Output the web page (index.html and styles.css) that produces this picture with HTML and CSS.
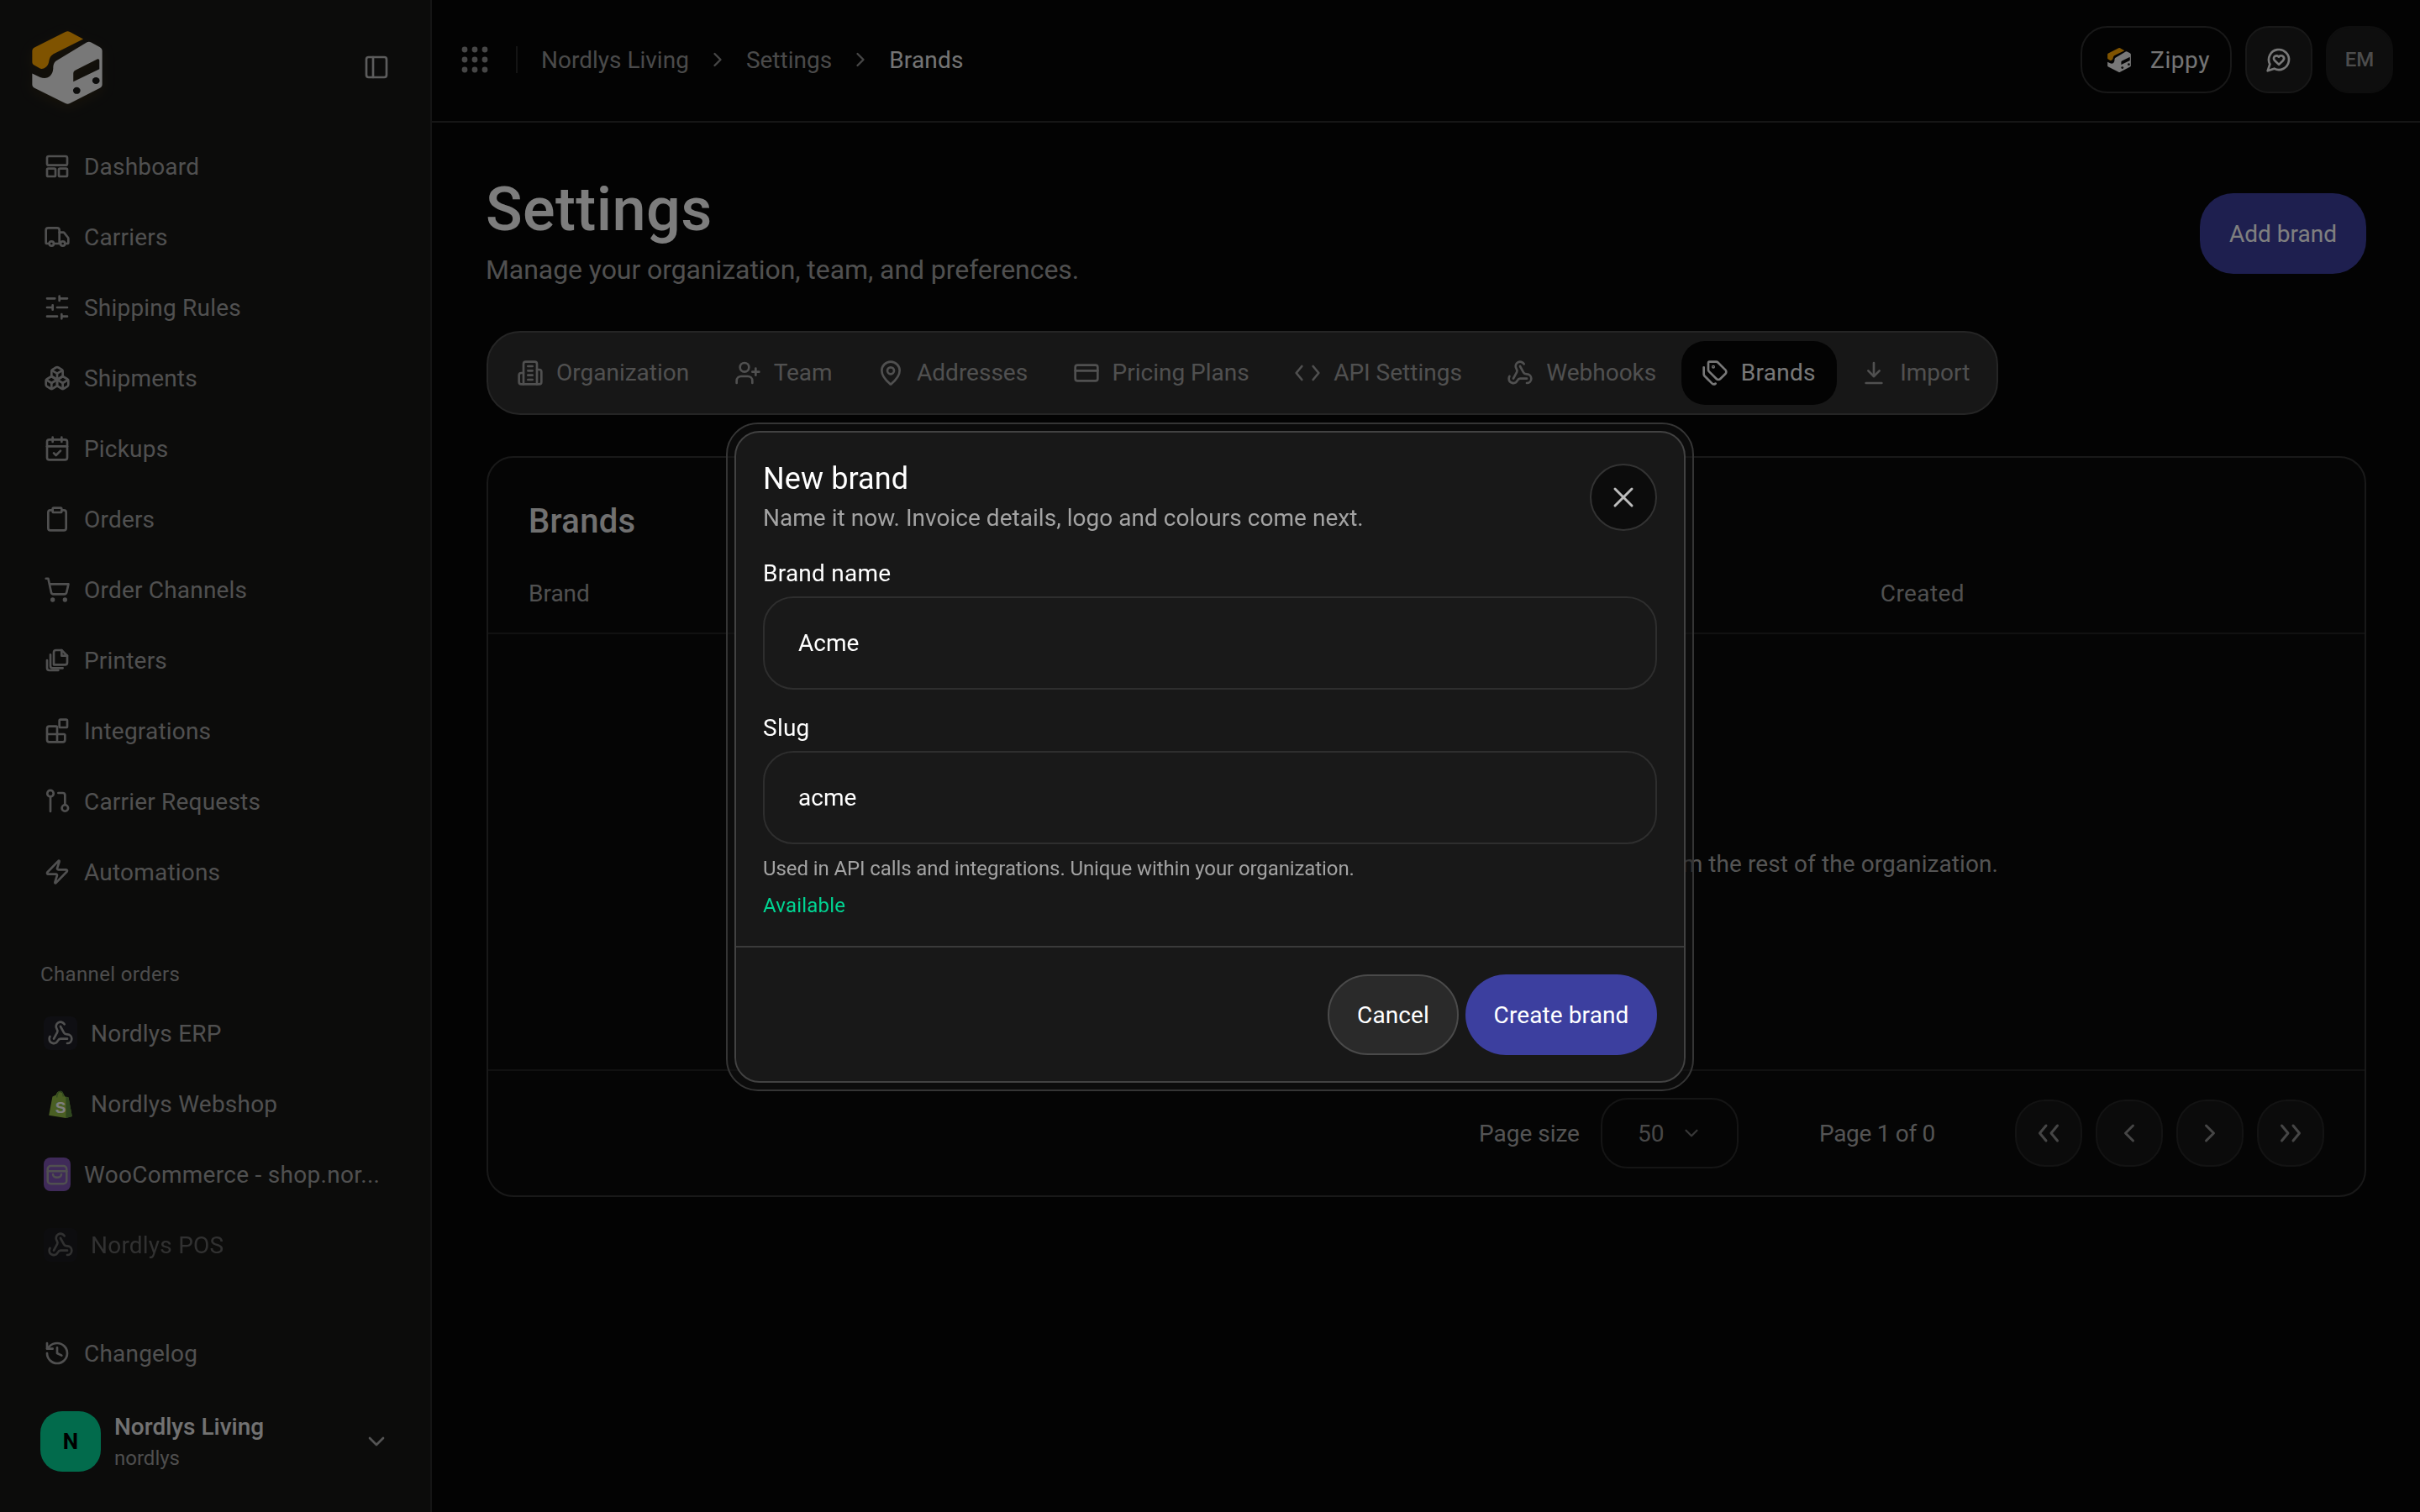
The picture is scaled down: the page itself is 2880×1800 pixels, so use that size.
FILE: index.html
```html
<!DOCTYPE html>
<html lang="en">
<head>
<meta charset="utf-8">
<title>Brands - Settings</title>
<link rel="stylesheet" href="styles.css">
</head>
<body>
<svg class="sprite" width="0" height="0" aria-hidden="true">
  <defs>
    <symbol id="i-dashboard" viewBox="0 0 24 24"><rect x="3" y="3" width="18" height="8" rx="1.5"/><rect x="3" y="14" width="7.5" height="7" rx="1"/><rect x="13.5" y="14" width="7.5" height="7" rx="1"/></symbol>
    <symbol id="i-truck" viewBox="0 0 24 24"><path d="M14 18V6a2 2 0 0 0-2-2H4a2 2 0 0 0-2 2v11a1 1 0 0 0 1 1h2"/><path d="M15 18H9"/><path d="M19 18h2a1 1 0 0 0 1-1v-3.65a1 1 0 0 0-.22-.624l-3.48-4.35A1 1 0 0 0 17.52 8H14"/><circle cx="17" cy="18" r="2"/><circle cx="7" cy="18" r="2"/></symbol>
    <symbol id="i-sliders" viewBox="0 0 24 24"><path d="M21 4h-7M10 4H3M21 12h-9M8 12H3M21 20h-5M12 20H3M14 2v4M8 10v4M16 18v4"/></symbol>
    <symbol id="i-boxes" viewBox="0 0 24 24"><path d="M2.97 12.92A2 2 0 0 0 2 14.63v3.24a2 2 0 0 0 .97 1.71l3 1.8a2 2 0 0 0 2.06 0L12 19v-5.5l-5-3-4.03 2.42Z"/><path d="m7 16.5-4.74-2.85"/><path d="m7 16.5 5-3"/><path d="M7 16.5v5.17"/><path d="M12 13.5V19l3.97 2.38a2 2 0 0 0 2.06 0l3-1.8a2 2 0 0 0 .97-1.71v-3.24a2 2 0 0 0-.97-1.71L17 10.5l-5 3Z"/><path d="m17 16.5-5-3"/><path d="m17 16.5 4.74-2.85"/><path d="M17 16.5v5.17"/><path d="M7.97 4.42A2 2 0 0 0 7 6.13v4.37l5 3 5-3V6.13a2 2 0 0 0-.97-1.71l-3-1.8a2 2 0 0 0-2.06 0l-3 1.8Z"/><path d="M12 8 7.26 5.15"/><path d="m12 8 4.74-2.85"/><path d="M12 13.5V8"/></symbol>
    <symbol id="i-calendar" viewBox="0 0 24 24"><path d="M8 2v4M16 2v4"/><rect x="3" y="4" width="18" height="18" rx="2"/><path d="M3 10h18"/><path d="m9 16 2 2 4-4"/></symbol>
    <symbol id="i-clipboard" viewBox="0 0 24 24"><rect x="8" y="2" width="8" height="4" rx="1"/><path d="M16 4h2a2 2 0 0 1 2 2v14a2 2 0 0 1-2 2H6a2 2 0 0 1-2-2V6a2 2 0 0 1 2-2h2"/></symbol>
    <symbol id="i-cart" viewBox="0 0 24 24"><circle cx="8" cy="21" r="1"/><circle cx="19" cy="21" r="1"/><path d="M2.05 2.05h2l2.66 12.42a2 2 0 0 0 2 1.58h9.78a2 2 0 0 0 1.95-1.57l1.65-7.43H5.12"/></symbol>
    <symbol id="i-files" viewBox="0 0 24 24"><path d="M9 16V5a2 2 0 0 1 2-2h5l5 5v6a2 2 0 0 1-2 2H9Z"/><path d="M16 3v5h5"/><path d="M6 7v10a2 2 0 0 0 2 2h9"/><path d="M3 12v7a2 2 0 0 0 2 2h8"/></symbol>
    <symbol id="i-blocks" viewBox="0 0 24 24"><path d="M12 22V9a1 1 0 0 0-1-1H5a2 2 0 0 0-2 2v10a2 2 0 0 0 2 2h12a2 2 0 0 0 2-2v-4a1 1 0 0 0-1-1H3"/><rect x="14" y="2" width="7" height="7" rx="1"/></symbol>
    <symbol id="i-requests" viewBox="0 0 24 24"><circle cx="6" cy="5" r="2.8"/><path d="M6 8v13"/><path d="M13 4.5h4a2 2 0 0 1 2 2V15"/><circle cx="19" cy="18" r="2.8"/></symbol>
    <symbol id="i-zap" viewBox="0 0 24 24"><path d="M4 14a1 1 0 0 1-.78-1.63l9.9-10.2a.5.5 0 0 1 .86.46l-1.92 6.02A1 1 0 0 0 13 10h7a1 1 0 0 1 .78 1.63l-9.9 10.2a.5.5 0 0 1-.86-.46l1.92-6.02A1 1 0 0 0 11 14z"/></symbol>
    <symbol id="i-webhook" viewBox="0 0 24 24"><path d="M18 16.98h-5.99c-1.1 0-1.95.94-2.48 1.9A4 4 0 0 1 2 17c.01-.7.2-1.4.57-2"/><path d="m6 17 3.13-5.78c.53-.97.1-2.18-.5-3.1a4 4 0 1 1 6.89-4.06"/><path d="m12 6 3.13 5.73C15.66 12.7 16.9 13 18 13a4 4 0 0 1 0 8"/></symbol>
    <symbol id="i-history" viewBox="0 0 24 24"><path d="M3 12a9 9 0 1 0 9-9 9.75 9.75 0 0 0-6.74 2.74L3 8"/><path d="M3 3v5h5"/><path d="M12 7v5l4 2"/></symbol>
    <symbol id="i-down" viewBox="0 0 24 24"><path d="m6 9 6 6 6-6"/></symbol>
    <symbol id="i-right" viewBox="0 0 24 24"><path d="m9 18 6-6-6-6"/></symbol>
    <symbol id="i-pg-left" viewBox="0 0 24 24"><path d="m15 18-6-6 6-6"/></symbol>
    <symbol id="i-pg-right" viewBox="0 0 24 24"><path d="m9 18 6-6-6-6"/></symbol>
    <symbol id="i-first" viewBox="0 0 24 24"><path d="m10 18-5-6 5-6"/><path d="m19 18-5-6 5-6"/></symbol>
    <symbol id="i-last" viewBox="0 0 24 24"><path d="m5 18 5-6-5-6"/><path d="m14 18 5-6-5-6"/></symbol>
    <symbol id="i-panel" viewBox="0 0 24 24"><rect x="3" y="3" width="18" height="18" rx="2"/><path d="M9 3v18"/></symbol>
    <symbol id="i-building" viewBox="0 0 24 24"><path d="M6 22V4a2 2 0 0 1 2-2h8a2 2 0 0 1 2 2v18Z"/><path d="M6 12H4a2 2 0 0 0-2 2v6a2 2 0 0 0 2 2h2"/><path d="M18 9h2a2 2 0 0 1 2 2v9a2 2 0 0 1-2 2h-2"/><path d="M10 6h4M10 10h4M10 14h4M10 18h4"/></symbol>
    <symbol id="i-userplus" viewBox="0 0 24 24"><path d="M16 21v-2a4 4 0 0 0-4-4H6a4 4 0 0 0-4 4v2"/><circle cx="9" cy="7" r="4"/><path d="M19 8v6M22 11h-6"/></symbol>
    <symbol id="i-pin" viewBox="0 0 24 24"><path d="M20 10c0 4.993-5.539 10.193-7.399 11.799a1 1 0 0 1-1.202 0C9.539 20.193 4 14.993 4 10a8 8 0 0 1 16 0"/><circle cx="12" cy="10" r="3"/></symbol>
    <symbol id="i-card" viewBox="0 0 24 24"><rect x="2" y="5" width="20" height="14" rx="2"/><path d="M2 10h20"/></symbol>
    <symbol id="i-code" viewBox="0 0 24 24"><path d="m17 6 5 6-5 6"/><path d="m7 6-5 6 5 6"/></symbol>
    <symbol id="i-tags" viewBox="0 0 24 24"><path d="M13.172 2a2 2 0 0 1 1.414.586l6.71 6.71a2.4 2.4 0 0 1 0 3.408l-4.592 4.592a2.4 2.4 0 0 1-3.408 0l-6.71-6.71A2 2 0 0 1 6 9.172V3a1 1 0 0 1 1-1z"/><path d="M2 7v6.172a2 2 0 0 0 .586 1.414l6.71 6.71a2.4 2.4 0 0 0 3.18.172"/><circle cx="10.5" cy="6.5" r=".5"/></symbol>
    <symbol id="i-import" viewBox="0 0 24 24"><path d="M12 3v12"/><path d="m7 10 5 5 5-5"/><path d="M5 21h14"/></symbol>
    <symbol id="i-chat" viewBox="0 0 24 24"><path d="M7.9 20A9 9 0 1 0 4 16.1L2 22Z"/><path d="M15.8 9.2a2.5 2.5 0 0 0-3.5 0l-.3.4-.35-.3a2.42 2.42 0 1 0-3.2 3.6l3.6 3.5 3.6-3.5c1.2-1.2 1.1-2.7.2-3.7"/></symbol>
    <symbol id="i-x" viewBox="0 0 24 24"><path d="M18 6 6 18"/><path d="m6 6 12 12"/></symbol>
    <symbol id="logo" viewBox="55 52 247 258">
      <path class="logo-amber" d="M172 55a18 18 0 0 1 16 0l47 25-105 53c-10 6-14 14-16 26-2 16-14 28-30 26L63 173c-6-3-8-7-8-13v-37c0-6 3-10 8-13z"/>
      <path class="logo-body" fill-rule="evenodd" d="M247 92a18 18 0 0 1 16 0l30 16c6 3 9 8 9 14v118c0 6-3 10-8 13l-106 54a18 18 0 0 1-16 0L63 253c-5-3-8-7-8-13v-38l28 13c24 10 44-4 46-30 0-14 3-24 14-30z M208 190l76-39c5-2 8 0 8 5v30l-92 45v-29c0-6 3-10 8-12z"/>
      <ellipse class="logo-hole" cx="212" cy="262" rx="13" ry="12"/>
      <ellipse class="logo-hole" cx="280" cy="227" rx="13" ry="12"/>
    </symbol>
  </defs>
</svg>

<div class="app">
  <aside class="sidebar">
    <div class="brand-row">
      <svg class="logo"><use href="#logo"/></svg>
      <svg class="ico panel-toggle"><use href="#i-panel"/></svg>
    </div>
    <nav class="nav">
      <a class="nav-item"><svg class="ico"><use href="#i-dashboard"/></svg><span>Dashboard</span></a>
      <a class="nav-item"><svg class="ico"><use href="#i-truck"/></svg><span>Carriers</span></a>
      <a class="nav-item"><svg class="ico"><use href="#i-sliders"/></svg><span>Shipping Rules</span></a>
      <a class="nav-item"><svg class="ico"><use href="#i-boxes"/></svg><span>Shipments</span></a>
      <a class="nav-item"><svg class="ico"><use href="#i-calendar"/></svg><span>Pickups</span></a>
      <a class="nav-item"><svg class="ico"><use href="#i-clipboard"/></svg><span>Orders</span></a>
      <a class="nav-item"><svg class="ico"><use href="#i-cart"/></svg><span>Order Channels</span></a>
      <a class="nav-item"><svg class="ico"><use href="#i-files"/></svg><span>Printers</span></a>
      <a class="nav-item"><svg class="ico"><use href="#i-blocks"/></svg><span>Integrations</span></a>
      <a class="nav-item"><svg class="ico"><use href="#i-requests"/></svg><span>Carrier Requests</span></a>
      <a class="nav-item"><svg class="ico"><use href="#i-zap"/></svg><span>Automations</span></a>
    </nav>
    <div class="side-label">Channel orders</div>
    <nav class="nav channels">
      <a class="nav-item channel"><span class="chan-box hook"><svg class="ico-sm"><use href="#i-webhook"/></svg></span><span>Nordlys ERP</span></a>
      <a class="nav-item channel"><span class="chan-box">
        <svg class="shopify" viewBox="0 0 28 32"><path class="bag" d="M5 8 1 29l19 3 7-2-4-21-4-1-1-2c-1-2-2-3-4-3C12 1 10 3 9 6z"/><path class="bag-dark" d="M20 32l7-2-4-21-3-1z"/><path class="bag-line" d="M10 9c0-4 2-7 4-7s3 2 3 6"/><text class="bag-s" x="8" y="26">S</text></svg>
      </span><span>Nordlys Webshop</span></a>
      <a class="nav-item channel woo"><span class="chan-box woo-box"><svg class="woo-ico" viewBox="0 0 24 24"><rect x="3" y="4" width="18" height="17" rx="3"/><path d="M3 9h18"/><path d="M8 12a4 3 0 0 0 8 0"/></svg></span><span class="woo-name">WooCommerce - shop.nor...</span></a>
      <a class="nav-item channel off"><span class="chan-box hook"><svg class="ico-sm"><use href="#i-webhook"/></svg></span><span>Nordlys POS</span></a>
    </nav>
    <div class="side-foot">
      <a class="nav-item"><svg class="ico"><use href="#i-history"/></svg><span>Changelog</span></a>
      <div class="org">
        <div class="org-avatar">N</div>
        <div class="org-text"><div class="org-name">Nordlys Living</div><div class="org-slug">nordlys</div></div>
        <svg class="ico org-chev"><use href="#i-down"/></svg>
      </div>
    </div>
  </aside>

  <div class="main">
    <header class="topbar">
      <div class="crumbs">
        <svg class="dots" viewBox="0 0 32 32"><circle cx="4" cy="4" r="3.4"/><circle cx="16" cy="4" r="3.4"/><circle cx="28" cy="4" r="3.4"/><circle cx="4" cy="16" r="3.4"/><circle cx="16" cy="16" r="3.4"/><circle cx="28" cy="16" r="3.4"/><circle cx="4" cy="28" r="3.4"/><circle cx="16" cy="28" r="3.4"/><circle cx="28" cy="28" r="3.4"/></svg>
        <span class="vr"></span>
        <span class="crumb">Nordlys Living</span>
        <svg class="crumb-chev"><use href="#i-right"/></svg>
        <span class="crumb">Settings</span>
        <svg class="crumb-chev"><use href="#i-right"/></svg>
        <span class="crumb now">Brands</span>
      </div>
      <div class="top-actions">
        <button class="zippy"><svg class="zippy-logo"><use href="#logo"/></svg><span>Zippy</span></button>
        <button class="square"><svg class="ico chat"><use href="#i-chat"/></svg></button>
        <div class="square me">EM</div>
      </div>
    </header>

    <main class="page">
      <div class="page-head">
        <div>
          <h1>Settings</h1>
          <p class="lead">Manage your organization, team, and preferences.</p>
        </div>
        <button class="add">Add brand</button>
      </div>

      <div class="tabs">
        <a class="tab"><svg class="ico"><use href="#i-building"/></svg><span>Organization</span></a>
        <a class="tab"><svg class="ico"><use href="#i-userplus"/></svg><span>Team</span></a>
        <a class="tab"><svg class="ico"><use href="#i-pin"/></svg><span>Addresses</span></a>
        <a class="tab"><svg class="ico"><use href="#i-card"/></svg><span>Pricing Plans</span></a>
        <a class="tab"><svg class="ico"><use href="#i-code"/></svg><span>API Settings</span></a>
        <a class="tab"><svg class="ico"><use href="#i-webhook"/></svg><span>Webhooks</span></a>
        <a class="tab on"><svg class="ico"><use href="#i-tags"/></svg><span>Brands</span></a>
        <a class="tab"><svg class="ico"><use href="#i-import"/></svg><span>Import</span></a>
      </div>

      <section class="card">
        <h2>Brands</h2>
        <div class="thead"><span>Brand</span><span>Created</span></div>
        <div class="empty"><p>from the rest of the organization.</p></div>
        <div class="tfoot">
          <span class="muted">Page size</span>
          <div class="select"><span>50</span><svg class="sel-chev"><use href="#i-down"/></svg></div>
          <span class="muted page-of">Page 1 of 0</span>
          <div class="pager">
            <button class="pg"><svg class="pg-ico"><use href="#i-first"/></svg></button>
            <button class="pg"><svg class="pg-ico"><use href="#i-pg-left"/></svg></button>
            <button class="pg"><svg class="pg-ico"><use href="#i-pg-right"/></svg></button>
            <button class="pg"><svg class="pg-ico"><use href="#i-last"/></svg></button>
          </div>
        </div>
      </section>
    </main>
  </div>
</div>

<div class="overlay">
  <div class="ring">
    <div class="dialog">
      <div class="dlg-body">
        <h3>New brand</h3>
        <p class="dlg-sub">Name it now. Invoice details, logo and colours come next.</p>
        <button class="close"><svg class="close-x"><use href="#i-x"/></svg></button>
        <label class="lbl">Brand name</label>
        <div class="input">Acme</div>
        <label class="lbl">Slug</label>
        <div class="input">acme</div>
        <p class="help">Used in API calls and integrations. Unique within your organization.</p>
        <p class="ok">Available</p>
      </div>
      <div class="dlg-foot">
        <button class="btn cancel">Cancel</button>
        <button class="btn create">Create brand</button>
      </div>
    </div>
  </div>
</div>
</body>
</html>
```
FILE: styles.css
```css
* { box-sizing: border-box; }
html, body { margin: 0; height: 100%; }
body {
  font-family: Roboto, "Liberation Sans", Arial, sans-serif;
  font-size: 28px;
  background: #060606;
  color: #f0f0f0;
  overflow: hidden;
}
.sprite { position: absolute; }
h1, h2, h3, p { margin: 0; font-weight: 400; }
button { font: inherit; color: inherit; background: none; border: 0; padding: 0; }
.ico, .ico-sm, .crumb-chev, .sel-chev, .close-x, .pg-ico, .woo-ico {
  fill: none; stroke: currentColor; stroke-linecap: round; stroke-linejoin: round; stroke-width: 2;
  flex: none;
}
.ico { width: 32px; height: 32px; }
.ico-sm { width: 32px; height: 32px; }

.app { display: flex; height: 1800px; }

/* sidebar */
.sidebar {
  width: 514px; flex: none; height: 100%;
  background: #181817;
  border-right: 2px solid #2a2a2a;
  display: flex; flex-direction: column;
  padding-bottom: 48px;
  color: #a0a0a0;
}
.brand-row { height: 160px; flex: none; display: flex; align-items: flex-start; padding: 37px 48px 0 38px; justify-content: space-between; }
.logo { width: 84px; height: 87px; filter: drop-shadow(0 4px 8px rgba(255,166,0,.1)); }
.logo-amber { fill: #ffa600; }
.logo-body { fill: #f0f0f0; }
.logo-hole { fill: #181817; }
.panel-toggle { margin-top: 27px; color: #b8b8b8; }
.nav { display: flex; flex-direction: column; gap: 8px; }
.nav-item { height: 76px; display: flex; align-items: center; gap: 16px; padding-left: 52px; flex: none; letter-spacing: .2px; }
.nav-item > span:last-child { padding-top: 1px; }
.side-label { margin: 68px 0 16px 48px; font-size: 24px; line-height: 32px; color: #9a9a9a; letter-spacing: .35px; }
.chan-box { width: 40px; height: 40px; border-radius: 8px; display: flex; align-items: center; justify-content: center; flex: none; }
.chan-box.hook { background: #1e1e26; }
.shopify { width: 30px; height: 34px; }
.bag { fill: #95bf47; }
.bag-dark { fill: #5e8e3e; }
.bag-line { fill: none; stroke: #5e8e3e; stroke-width: 1.2; }
.bag-s { fill: #fff; font-size: 18px; font-weight: 700; font-family: "Liberation Sans", sans-serif; }
.woo-box { width: 32px; background: #7f54b3; color: #a0a0a0; }
.woo-ico { width: 30px; height: 30px; }
.woo-name { white-space: nowrap; letter-spacing: .28px; }
.channel { letter-spacing: .22px; }
.channel.off { opacity: .55; }
.side-foot { margin-top: auto; }
.org { display: flex; align-items: center; margin: 31px 0 0 48px; height: 72px; }
.org-avatar {
  width: 72px; height: 72px; border-radius: 26px; background: #04d698;
  color: #000; font-size: 26px; font-weight: 700; display: flex; align-items: center; justify-content: center; flex: none;
}
.org-text { margin-left: 16px; flex: 1; padding-top: 2px; }
.org-name { font-weight: 500; line-height: 38px; color: #e4e4e4; }
.org-slug { font-size: 24px; line-height: 36px; color: #9c9c9c; }
.org-chev { margin-right: 48px; color: #a8a8a8; }

/* top bar */
.main { flex: 1; min-width: 0; display: flex; flex-direction: column; }
.topbar {
  height: 146px; flex: none; border-bottom: 2px solid #2c2c2c;
  display: flex; justify-content: space-between; align-items: center;
  padding: 0 32px 2px 35px;
}
.crumbs { display: flex; align-items: center; }
.dots { width: 32px; height: 32px; fill: #8c8c8c; }
.vr { width: 2px; height: 32px; background: #282828; margin: 0 28px 0 33px; }
.crumb { color: #949494; }
.crumb.now { color: #e8e8e8; letter-spacing: .2px; }
.crumb-chev { width: 28px; height: 28px; color: #8c8c8c; margin: 0 20px; }
.top-actions { display: flex; gap: 16px; align-items: center; }
.zippy {
  width: 180px; height: 80px; border-radius: 32px; border: 2px solid #303030;
  display: flex; align-items: center; gap: 23px; padding-left: 30px; color: #e8e8e8; font-size: 28px; letter-spacing: .6px;
}
.zippy-logo { width: 28px; height: 29px; }
.square {
  width: 80px; height: 80px; border-radius: 28px; background: #1c1c1c; border: 2px solid #303030;
  display: flex; align-items: center; justify-content: center;
}
.chat { color: #f0f0f0; }
.me { border-color: #1c1c1c; color: #989898; font-size: 24px; font-weight: 500; }

/* page */
.page { padding: 64px 64px 0 65px; }
.page-head { display: flex; justify-content: space-between; align-items: flex-start; }
h1 { font-size: 72px; line-height: 80px; font-weight: 500; color: #fafafa; margin-left: -1px; letter-spacing: .4px; }
.lead { font-size: 32px; line-height: 44px; margin: 9px 0 0 -1px; color: #a0a0a0; letter-spacing: -.07px; }
.add {
  margin-top: 20px; width: 198px; height: 96px; border-radius: 40px; background: #3c3f9f; color: #fff; font-weight: 450;
}
.tabs {
  margin-top: 51px; width: 1799px; height: 100px; padding: 10px;
  background: #2e2e2e; border: 2px solid #4a4a4a; border-radius: 40px;
  display: flex; gap: 4.4px; color: #a0a0a0;
}
.tab { height: 76px; display: flex; align-items: center; gap: 15px; padding: 0 25px 0 24px; border-radius: 28px; white-space: nowrap; }
.tab span { padding-bottom: 2px; }
.tab.on { background: #060606; color: #f0f0f0; letter-spacing: .3px; }
.card {
  margin-top: 49px; height: 882px; border: 2px solid #333; border-radius: 32px; background: #0a0a0a;
  display: flex; flex-direction: column;
}
h2 { align-self: flex-start; font-size: 40px; line-height: 52px; font-weight: 500; margin: 50px 48px 0; color: #e0e0e0; letter-spacing: .3px; }
.thead { height: 82px; flex: none; margin-top: 26px; border-bottom: 2px solid #222; display: flex; justify-content: space-between; align-items: flex-start; padding: 17px 0 0 48px; color: #a0a0a0; }
.thead span:last-child { margin-right: 476px; letter-spacing: .4px; }
.empty { flex: 1; display: flex; align-items: center; justify-content: flex-end; color: #a8a8a8; padding: 28px 436px 0 0; letter-spacing: .08px; }
.tfoot { height: 150px; flex: none; border-top: 2px solid #222; display: flex; align-items: center; padding-right: 48px; justify-content: flex-end; color: #a8a8a8; }
.select { width: 164px; height: 84px; border: 2px solid #2a2a2a; border-radius: 32px; margin-left: 25px; display: flex; align-items: center; padding-left: 42px; gap: 20px; color: #909090; }
.sel-chev { width: 26px; height: 26px; color: #707070; }
.page-of { margin-left: 96px; margin-right: 95px; letter-spacing: -.3px; }
.pager { display: flex; gap: 16px; }
.pg { width: 80px; height: 80px; border-radius: 36px; background: #161616; border: 2px solid #262626; display: flex; align-items: center; justify-content: center; color: #8c8c8c; }
.pg-ico { width: 36px; height: 36px; }

/* modal */
.overlay {
  position: fixed; inset: 0; background: rgba(0,0,0,.5);
  display: flex; align-items: center; justify-content: center;
}
.ring {
  width: 1152px; margin-top: 2px; padding: 8px; background: rgba(20,20,20,.5); border: 2px solid #353535; border-radius: 38px;
}
.dialog { background: #181818; border: 2px solid #424242; border-radius: 30px; color: #fff; }
.dlg-body { position: relative; padding: 31px 32px 32px; }
h3 { font-size: 36px; line-height: 48px; font-weight: 450; letter-spacing: .1px; }
.dlg-sub { line-height: 40px; margin-top: 3px; color: #a3a3a3; letter-spacing: .03px; }
.close {
  position: absolute; top: 37px; right: 32px; width: 80px; height: 80px; border-radius: 50%;
  background: #0c0c0c; border: 2px solid #333; display: flex; align-items: center; justify-content: center; color: #bdbdbd;
}
.close-x { width: 40px; height: 40px; stroke-width: 1.8; }
.lbl { display: block; font-weight: 450; line-height: 36px; margin: 28px 0 9px; letter-spacing: .25px; }
.input { height: 111px; border: 2px solid #2e2e2e; border-radius: 36px; background: #191919; display: flex; align-items: center; padding-left: 40px; font-size: 28px; }
.help { font-size: 24px; line-height: 32px; margin-top: 13px; color: #a3a3a3; letter-spacing: -.1px; }
.ok { font-size: 24px; line-height: 32px; margin-top: 12px; color: #00d492; letter-spacing: .2px; }
.dlg-foot { border-top: 2px solid #3a3a3a; padding: 32px 32px 31px; display: flex; justify-content: flex-end; gap: 8px; }
.btn { height: 96px; border-radius: 48px; font-weight: 450; color: #fff; letter-spacing: .1px; }
.cancel { width: 156px; background: #2a2a2a; border: 2px solid #4a4a4a; }
.create { width: 228px; background: #3c3f9f; }
```
